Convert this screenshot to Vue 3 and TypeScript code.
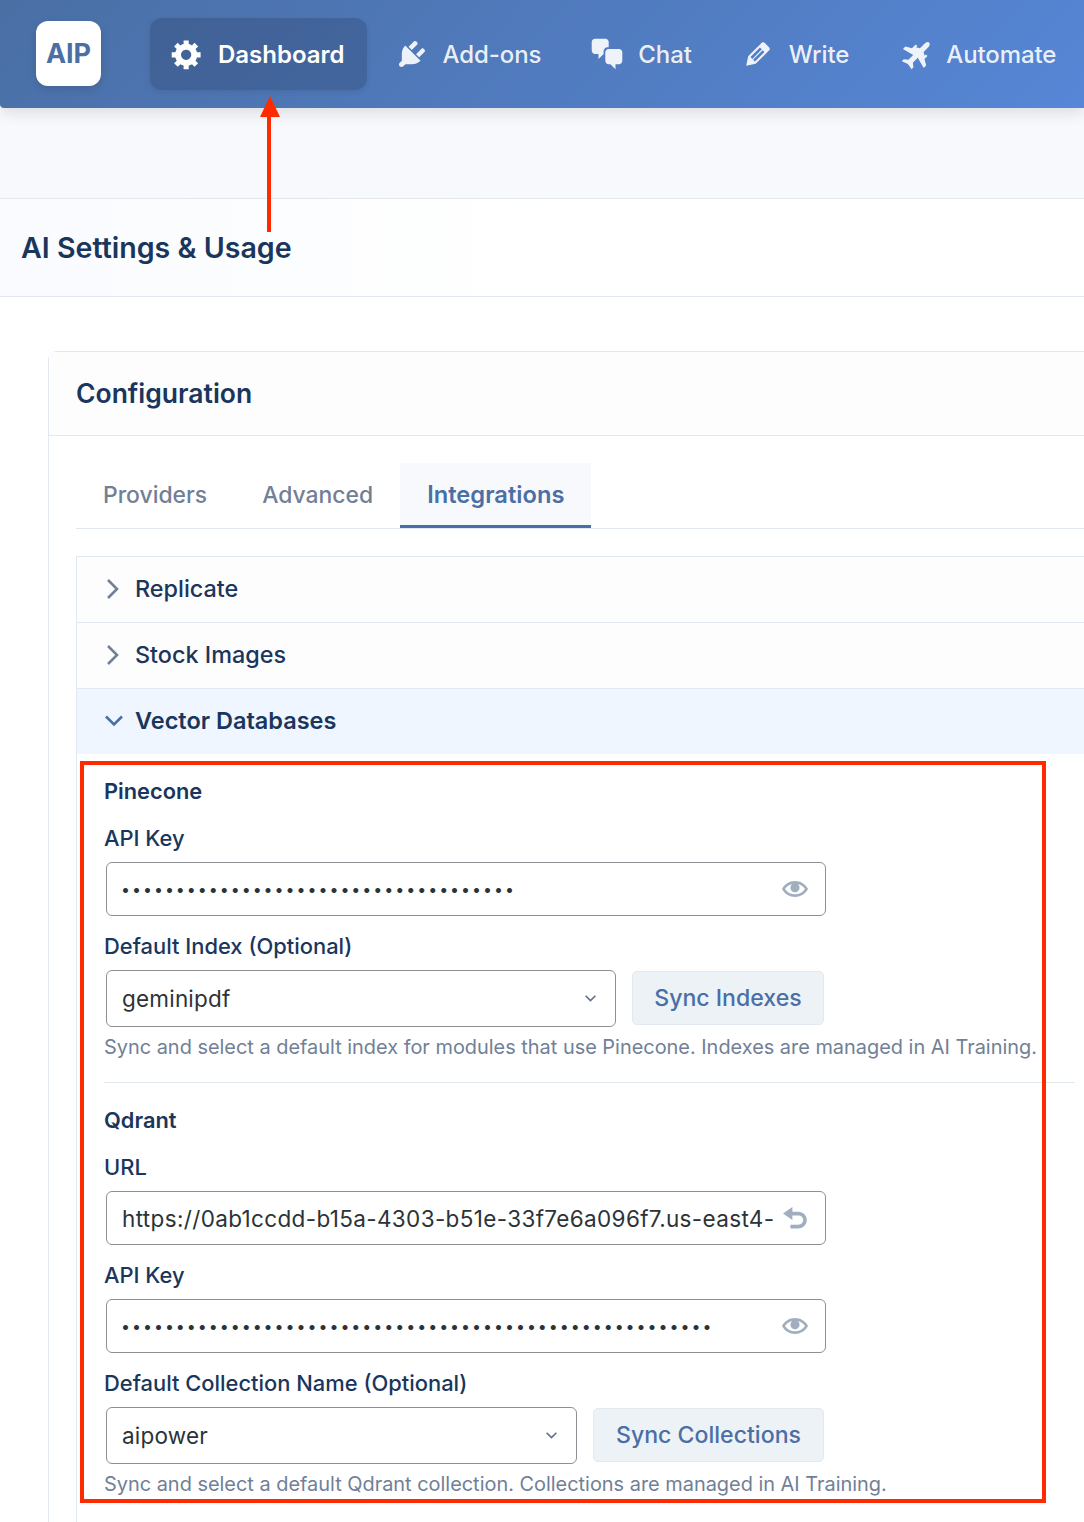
<script setup lang="ts">
interface NavItem { label: string; icon: string; active?: boolean; tf?: string }
const nav: NavItem[] = [
  { label: 'Dashboard', active: true, icon: 'M18 12h-2.18c-.17.7-.44 1.35-.81 1.93l1.54 1.54-2.1 2.1-1.54-1.54c-.58.36-1.23.63-1.91.79V19H8v-2.18c-.68-.16-1.33-.43-1.91-.79l-1.54 1.54-2.12-2.12 1.54-1.54c-.36-.58-.63-1.23-.79-1.91H1V9.03h2.17c.16-.7.44-1.35.8-1.94L2.43 5.55l2.1-2.1 1.54 1.54c.58-.37 1.24-.64 1.93-.81V2h3v2.18c.68.16 1.33.43 1.91.79l1.54-1.54 2.12 2.12-1.54 1.54c.36.59.64 1.24.8 1.94H18V12zm-8.5 1.5c1.66 0 3-1.34 3-3s-1.34-3-3-3-3 1.34-3 3 1.34 3 3 3z' },
  { label: 'Add-ons', icon: 'M13.11 4.36L9.87 7.6 8 5.73l3.24-3.24c.35-.34 1.05-.2 1.56.32.52.51.66 1.21.31 1.55zm-8 1.77l.91-1.12 9.01 9.01-1.19.84c-.71.71-2.63 1.16-3.82 1.16H6.14L4.9 17.26c-.59.59-1.54.59-2.12 0-.59-.58-.59-1.53 0-2.12l1.24-1.24v-3.88c0-1.13.4-3.19 1.09-3.89zm7.26 3.97l3.24-3.24c.34-.35 1.04-.21 1.55.31.52.51.66 1.21.31 1.55l-3.24 3.25z' },
  { label: 'Chat', icon: 'M11 6h-.82C9.07 6 8 7.2 8 8.16V10l-3 3v-3H3c-1.1 0-2-.9-2-2V3c0-1.1.9-2 2-2h6c1.1 0 2 .9 2 2v3zm0 1h6c1.1 0 2 .9 2 2v5c0 1.1-.9 2-2 2h-2v3l-3-3h-1c-1.1 0-2-.9-2-2V9c0-1.1.9-2 2-2z' },
  { label: 'Write', icon: 'M13.89 3.39l2.71 2.72c.46.46.42 1.24.03 1.64l-8.01 8.02-5.56 1.16 1.16-5.58s7.6-7.63 7.99-8.03c.39-.39 1.22-.39 1.68.07zm-2.73 2.79l-5.59 5.61 1.11 1.11 5.54-5.65zm-2.97 8.23l5.58-5.6-1.07-1.08-5.59 5.6z' },
  { label: 'Automate', tf: 'rotate(45 10 10) translate(11.2 8.9) scale(.9) translate(-10 -10)', icon: 'M10-.6c1.1 0 1.7 1.4 1.7 3v3.9l2.3 1.3V6.4h1.4v2.8l3.8 2.2v2.3l-7.5-2v4.5l2.4 1.9v1.7L10 19.1l-4.1 1.5v-1.7l2.4-1.9v-4.5l-7.5 2v-2.3l3.8-2.2V6.4H6v1.2l2.3-1.3V2.4c0-1.6.6-3 1.7-3z' }
]
const tabs = ['Providers', 'Advanced', 'Integrations']
const eye = 'M19.7 9.4C17.7 6 14 3.9 10 3.9S2.3 6 .3 9.4L0 10l.3.6c2 3.4 5.7 5.5 9.7 5.5s7.7-2.1 9.7-5.5l.3-.6-.3-.6zM10 14.1c-3.1 0-6-1.6-7.7-4.1C3.6 8 5.7 6.6 8 6.1c-.9.6-1.5 1.7-1.5 2.9 0 1.9 1.6 3.5 3.5 3.5s3.5-1.6 3.5-3.5c0-1.2-.6-2.3-1.5-2.9 2.3.5 4.4 1.9 5.7 3.9-1.7 2.5-4.6 4.1-7.7 4.1z'
const undo = 'M8 1.5L.8 6.5 8 11.5V8h4.5c2.2 0 3.8 1.6 3.8 3.6s-1.6 3.6-3.8 3.6H6.5V18h6c3.8 0 6.6-2.9 6.6-6.4S16.3 5.2 12.5 5.2H8z'
const keyA = 'x'.repeat(36)
const keyB = 'x'.repeat(54)
const url = 'https://0ab1ccdd-b15a-4303-b51e-33f7e6a096f7.us-east4-0.gcp.cloud.qdrant.io'
</script>

<template>
  <div class="page">
    <header class="topbar">
      <div class="logo">AIP</div>
      <nav class="nav">
        <a v-for="n in nav" :key="n.label" class="nav-item" :class="{ active: n.active }">
          <svg class="nav-icon" viewBox="0 0 20 20"><path :d="n.icon" :transform="n.tf" /></svg>
          <span>{{ n.label }}</span>
        </a>
      </nav>
    </header>
    <div class="spacer"></div>
    <div class="title-band"><h1>AI Settings &amp; Usage</h1></div>
    <main class="main">
      <section class="card">
        <div class="card-head"><h2>Configuration</h2></div>
        <div class="card-body">
          <div class="tabs">
            <div v-for="t in tabs" :key="t" class="tab" :class="{ on: t === 'Integrations' }">{{ t }}</div>
          </div>
          <div class="accordion">
            <div class="acc-row">
              <svg class="chev" viewBox="0 0 14 24"><path d="M2 3l9 9-9 9" /></svg>
              <span>Replicate</span>
            </div>
            <div class="acc-row">
              <svg class="chev" viewBox="0 0 14 24"><path d="M2 3l9 9-9 9" /></svg>
              <span>Stock Images</span>
            </div>
            <div class="acc-row open">
              <svg class="chev down" viewBox="0 0 20 14"><path d="M2 2.5l8 8 8-8" /></svg>
              <span>Vector Databases</span>
            </div>
            <div class="acc-content">
              <h3>Pinecone</h3>
              <label class="lbl first">API Key</label>
              <div class="field">
                <input class="pw" type="password" :value="keyA" readonly />
                <svg class="eye" viewBox="0 0 20 20"><path :d="eye" /></svg>
              </div>
              <label class="lbl">Default Index (Optional)</label>
              <div class="select-row">
                <div class="select w510"><span>geminipdf</span>
                  <svg class="caret" viewBox="0 0 12 8"><path d="M1.5 1.5L6 6l4.5-4.5" /></svg>
                </div>
                <button class="btn w192">Sync Indexes</button>
              </div>
              <p class="help">Sync and select a default index for modules that use Pinecone. Indexes are managed in AI Training.</p>
              <div class="divider"></div>
              <h3>Qdrant</h3>
              <label class="lbl first">URL</label>
              <div class="field">
                <input class="txt" type="text" :value="url" readonly />
                <svg class="eye" viewBox="0 0 20 20"><path :d="undo" /></svg>
              </div>
              <label class="lbl">API Key</label>
              <div class="field">
                <input class="pw" type="password" :value="keyB" readonly />
                <svg class="eye" viewBox="0 0 20 20"><path :d="eye" /></svg>
              </div>
              <label class="lbl">Default Collection Name (Optional)</label>
              <div class="select-row">
                <div class="select w471"><span>aipower</span>
                  <svg class="caret" viewBox="0 0 12 8"><path d="M1.5 1.5L6 6l4.5-4.5" /></svg>
                </div>
                <button class="btn w231">Sync Collections</button>
              </div>
              <p class="help">Sync and select a default Qdrant collection. Collections are managed in AI Training.</p>
            </div>
          </div>
        </div>
      </section>
    </main>

    <div class="arrow-line"></div>
    <div class="arrow-head"></div>
    <div class="red-box"></div>
  </div>
</template>

<style>
html, body { margin: 0; background: #fff; }
</style>

<style scoped>
.page {
  position: relative;
  width: 1084px;
  height: 1522px;
  overflow: hidden;
  background: #fff;
  font-family: Inter, "Noto Sans", sans-serif;
  color: #1a365d;
}
.topbar {
  position: relative;
  z-index: 2;
  height: 108px;
  box-sizing: border-box;
  display: flex;
  align-items: center;
  padding: 0 0 0 36px;
  background: linear-gradient(135deg, #4a6fa5 0%, #5686d6 100%);
  border-bottom-left-radius: 4px;
  box-shadow: 0 6px 14px rgba(0, 0, 0, 0.1);
}
.logo {
  width: 65px;
  height: 65px;
  margin-top: -1px;
  border-radius: 12px;
  background: #fff;
  display: flex;
  align-items: center;
  justify-content: center;
  font-size: 27px;
  font-weight: 700;
  color: #4a6fa5;
  box-shadow: 0 3px 8px rgba(0, 0, 0, 0.12);
}
.nav { display: flex; gap: 7px; margin-left: 49px; }
.nav-item {
  height: 72px;
  box-sizing: border-box;
  display: flex;
  align-items: center;
  gap: 14px;
  padding: 0 22px 0 20px;
  border-radius: 12px;
  font-size: 24px;
  font-weight: 500;
  letter-spacing: -0.1px;
  color: rgba(255, 255, 255, 0.9);
  white-space: nowrap;
}
.nav-item.active {
  background: rgba(40, 60, 100, 0.3);
  color: #fff;
  font-weight: 600;
  letter-spacing: 0;
  margin-right: 1px;
  box-shadow: 0 2px 6px rgba(0, 0, 0, 0.08);
}
.nav-icon { width: 34px; height: 34px; fill: currentColor; flex: none; overflow: visible; }
.spacer { height: 90px; background: #f8f9fc; }
.title-band {
  height: 99px;
  box-sizing: border-box;
  border-top: 1px solid #e2e8f0;
  border-bottom: 1px solid #e2e8f0;
  background: linear-gradient(90deg, #f9fbfe, #fff 50%);
  display: flex;
  align-items: center;
  padding-left: 21px;
}
h1 { margin: 0; font-size: 28.6px; font-weight: 600; color: #1a365d; }
.main { padding: 54px 0 0 48px; }
.card {
  width: 1100px;
  min-height: 1300px;
  border: 1px solid #e2e8f0;
  border-radius: 9px 0 0 0;
  background: #fff;
}
.card-head {
  height: 84px;
  box-sizing: border-box;
  border-bottom: 1px solid #e2e8f0;
  background: #fdfdfe;
  display: flex;
  align-items: center;
  padding: 0 0 2px 27px;
}
h2 { margin: 0; font-size: 26.5px; font-weight: 600; color: #1a365d; }
.card-body { padding: 27px 0 0 27px; }
.tabs { display: flex; height: 66px; box-sizing: border-box; border-bottom: 1px solid #e2e8f0; }
.tab {
  height: 65px;
  box-sizing: border-box;
  padding: 0 27px 2px;
  display: flex;
  align-items: center;
  font-size: 22.9px;
  font-weight: 500;
  color: #718096;
}
.tab + .tab { margin-left: 1px; }
.tab.on {
  background: #f8f9fc;
  color: #4a6fa5;
  font-size: 23.7px;
  font-weight: 600;
  margin-left: 0;
  padding: 1px 27px 0;
  border-bottom: 3px solid #4a6fa5;
}
.accordion { margin-top: 27px; border-left: 1px solid #e2e8f0; border-top: 1px solid #e2e8f0; padding-bottom: 120px; }
.acc-row {
  height: 66px;
  box-sizing: border-box;
  border-bottom: 1px solid #e2e8f0;
  background: #fdfdfe;
  display: flex;
  align-items: center;
  padding-bottom: 2px;
  font-size: 23.4px;
  font-weight: 500;
  color: #1a365d;
}
.chev {
  width: 14px;
  height: 24px;
  margin: 0 15px 0 29px;
  flex: none;
  fill: none;
  stroke: #718096;
  stroke-width: 2.6;
}
.acc-row.open { background: #eff6ff; border-bottom: 0; height: 65px; font-weight: 600; font-size: 23.5px; }
.chev.down { width: 20px; height: 14px; margin: 0 11px 0 27px; stroke: #4a6fa5; stroke-width: 2.6; }
.acc-content { padding: 0 0 0 27px; width: 971px; }
h3 { margin: 0; padding-top: 23px; font-size: 21.8px; line-height: 28px; font-weight: 600; color: #1a365d; }
.lbl {
  display: block;
  font-size: 21.9px;
  line-height: 28px;
  font-weight: 500;
  color: #1a365d;
  margin: 16px 0 10px;
}
.lbl.first { margin-top: 19px; }
.field { position: relative; width: 720px; height: 54px; margin-left: 2px; }
.field input {
  width: 100%;
  height: 100%;
  box-sizing: border-box;
  border: 1px solid #8c8f94;
  border-radius: 6px;
  background: #fff;
  outline: none;
  color: #2c3338;
  font-family: Inter, sans-serif;
  padding: 0 50px 0 15px;
  margin: 0;
  display: block;
}
.field .txt { font-size: 22.5px; letter-spacing: 0.35px; }
.field .pw { font-size: 16px; letter-spacing: 1.97px; padding-left: 14px; }
.eye { position: absolute; right: 18px; top: 14px; width: 26px; height: 26px; fill: #a0aec0; }
.select-row { display: flex; align-items: flex-start; gap: 16px; margin-left: 2px; width: 718px; height: 57px; }
.select {
  position: relative;
  height: 57px;
  box-sizing: border-box;
  border: 1px solid #8c8f94;
  border-radius: 6px;
  display: flex;
  align-items: center;
  padding-left: 15px;
  font-size: 22.5px;
  letter-spacing: 0.2px;
  color: #2c3338;
}
.w510 { width: 510px; }
.w471 { width: 471px; }
.caret {
  position: absolute;
  right: 18px;
  top: 23px;
  width: 13px;
  height: 9px;
  fill: none;
  stroke: #5f6f85;
  stroke-width: 1.5;
}
.btn {
  height: 54px;
  margin-top: 1px;
  box-sizing: border-box;
  border: 1px solid #e2e8f0;
  border-radius: 5px;
  background: #edf2f7;
  color: #4a6fa5;
  font-family: Inter, sans-serif;
  font-size: 23.1px;
  font-weight: 500;
  padding: 0;
}
.w192 { width: 192px; }
.w231 { width: 231px; }
.help { margin: 6px 0 0; font-size: 19.92px; line-height: 28px; color: #718096; white-space: nowrap; }
.divider { height: 1px; background: #e2e8f0; margin-top: 21px; }
.arrow-line { position: absolute; z-index: 3; left: 267px; top: 114px; width: 4px; height: 118px; background: #ff2a00; }
.arrow-head {
  position: absolute;
  z-index: 3;
  left: 260px;
  top: 96px;
  width: 0;
  height: 0;
  border-left: 10px solid transparent;
  border-right: 10px solid transparent;
  border-bottom: 21px solid #ff2a00;
}
.red-box {
  position: absolute;
  z-index: 3;
  left: 80px;
  top: 761px;
  width: 966px;
  height: 742px;
  box-sizing: border-box;
  border: 4px solid #ff2a00;
}
</style>
